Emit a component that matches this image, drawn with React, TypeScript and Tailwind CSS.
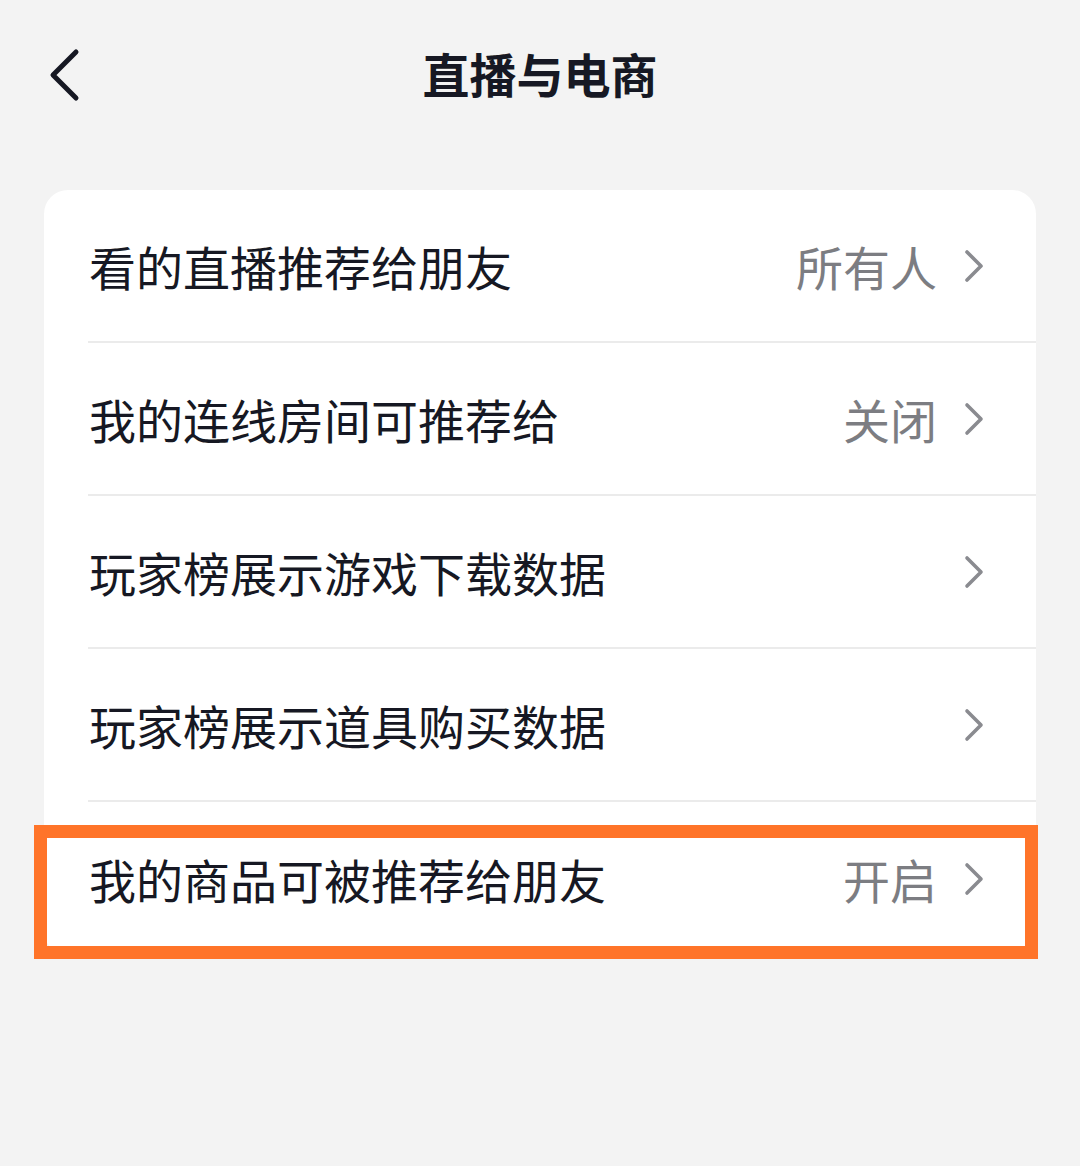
const rows = [
  { label: '看的直播推荐给朋友', value: '所有人' },
  { label: '我的连线房间可推荐给', value: '关闭' },
  { label: '玩家榜展示游戏下载数据', value: '' },
  { label: '玩家榜展示道具购买数据', value: '' },
  { label: '我的商品可被推荐给朋友', value: '开启' },
]

function BackIcon() {
  return (
    <svg width="40" height="60" viewBox="0 0 40 60" fill="none">
      <path d="M32 7 L9 30 L32 53" stroke="#161823" strokeWidth="5" strokeLinecap="round" strokeLinejoin="round" />
    </svg>
  )
}

function Chevron() {
  return (
    <svg width="22" height="34" viewBox="0 0 22 34" fill="none">
      <path d="M4 3 L18 17 L4 31" stroke="#8a8b90" strokeWidth="3.6" strokeLinecap="round" strokeLinejoin="round" />
    </svg>
  )
}

export default function App() {
  return (
    <div
      className="relative min-h-[1166px] w-[1080px] bg-[#f3f3f3] text-[#161823]"
      style={{ fontFamily: '"Noto Sans CJK SC", "Noto Sans", sans-serif' }}
    >
      <header className="relative flex h-[144px] items-center justify-center">
        <button className="absolute left-[44px] top-[45px]">
          <BackIcon />
        </button>
        <h1 className="text-[47px] font-bold leading-none">直播与电商</h1>
      </header>

      <div className="mx-[44px] mt-[46px] overflow-hidden rounded-[24px] bg-white">
        {rows.map((row, i) => (
          <div
            key={row.label}
            className={`ml-[44px] flex h-[153px] items-center justify-between pr-[51px] ${
              i < rows.length - 1 ? 'border-b-2 border-[#ebebeb]' : ''
            }`}
          >
            <span className="pl-[1px] text-[47px] leading-none">{row.label}</span>
            <span className="flex items-center gap-[26px]">
              {row.value && <span className="text-[47px] leading-none text-[#7c7d82]">{row.value}</span>}
              <Chevron />
            </span>
          </div>
        ))}
      </div>

      <div className="pointer-events-none absolute left-[34px] top-[825px] h-[134px] w-[1004px] border-[13px] border-[#ff7429]" />
    </div>
  )
}
